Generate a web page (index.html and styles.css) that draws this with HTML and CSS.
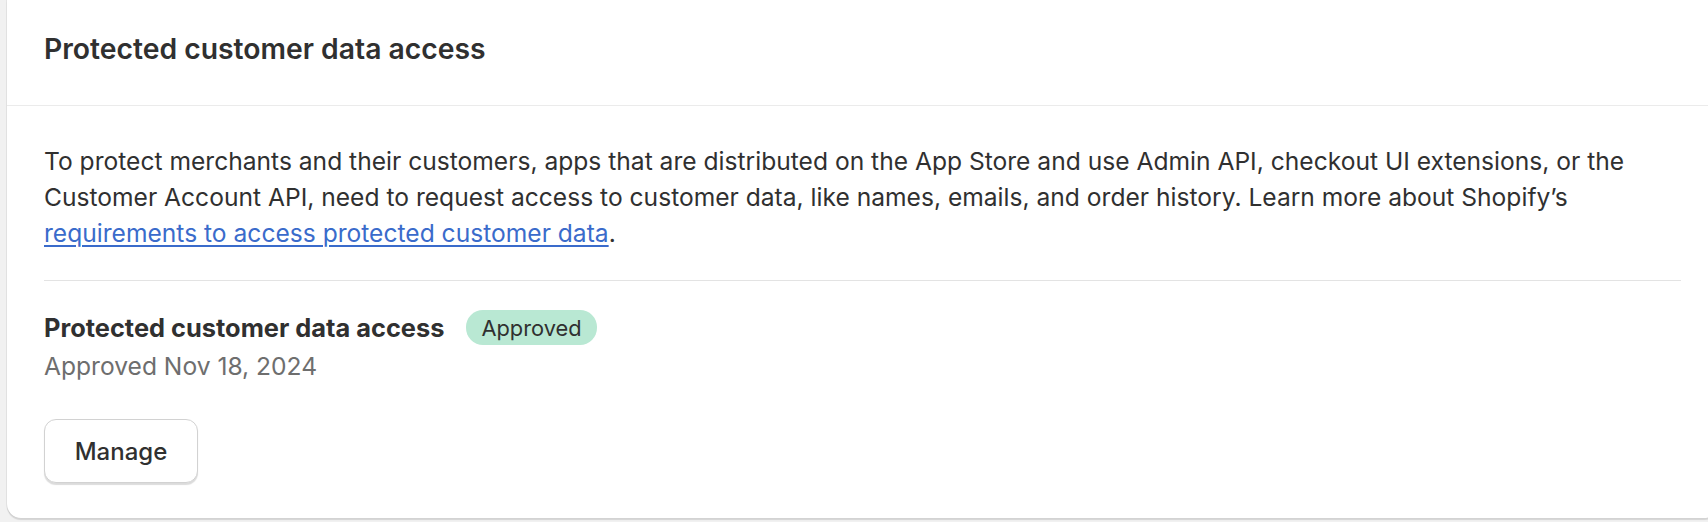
FILE: index.html
```html
<!DOCTYPE html>
<html lang="en">
<head>
<meta charset="utf-8">
<title>Protected customer data access</title>
<link rel="stylesheet" href="styles.css">
</head>
<body>
<div class="card">
  <div class="card-header">
    <h2 class="card-title">Protected customer data access</h2>
  </div>
  <div class="card-body">
    <p class="intro">To protect merchants and their customers, apps that are distributed on the App Store and use Admin API, checkout UI extensions, or the Customer Account API, need to request access to customer data, like names, emails, and order history. Learn more about Shopify’s <a class="link" href="#">requirements to access protected customer data</a>.</p>
    <hr class="divider">
    <div class="status-row">
      <h3 class="status-title">Protected customer data access</h3>
      <span class="badge">Approved</span>
    </div>
    <p class="status-date">Approved Nov 18, 2024</p>
    <button class="btn" type="button">Manage</button>
  </div>
</div>
</body>
</html>
```
FILE: styles.css
```css
html, body {
  margin: 0;
  padding: 0;
  background: #f1f1f1;
  overflow: hidden;
}
body {
  font-family: Inter, "Noto Sans", "Liberation Sans", sans-serif;
  color: #303030;
  width: 1708px;
  height: 522px;
}
.card {
  margin-left: 7px;
  width: 1711px;
  background: #ffffff;
  border-radius: 0 0 14px 14px;
  box-shadow: 0 2px 1px rgba(0, 0, 0, 0.12), -1px 0 0 rgba(0, 0, 0, 0.05);
}
.card-header {
  padding: 34px 37px 41px;
  border-bottom: 1px solid #ebebeb;
}
.card-title {
  margin: 0;
  font-size: 28.3px;
  line-height: 30px;
  font-weight: 600;
  color: #303030;
}
.card-body {
  padding: 37px 37px 35px;
}
.intro {
  margin: 0;
  font-size: 24.6px;
  line-height: 36px;
  color: #303030;
}
.link {
  color: #3a6bcb;
  text-decoration: underline;
  text-underline-offset: 3px;
  text-decoration-thickness: 1.5px;
}
.divider {
  margin: 29px 0 28px;
  border: 0;
  border-top: 1px solid #e3e3e3;
  height: 0;
}
.status-row {
  display: flex;
  align-items: center;
  gap: 22px;
  height: 37px;
}
.status-title {
  margin: 0;
  font-size: 25.4px;
  line-height: 36px;
  font-weight: 700;
  color: #303030;
}
.badge {
  display: inline-flex;
  align-items: center;
  height: 35px;
  padding: 0 15px;
  border-radius: 17px;
  background: #b9e8d3;
  color: #303030;
  font-size: 21.8px;
  font-weight: 400;
}
.status-date {
  margin: 2px 0 0;
  font-size: 24.6px;
  line-height: 36px;
  color: #6e6e6e;
}
.btn {
  margin-top: 35px;
  width: 154px;
  height: 64px;
  background: #ffffff;
  border: 1px solid #d2d2d2;
  border-radius: 12px;
  box-shadow: 0 2px 1px rgba(0, 0, 0, 0.14);
  font-family: Inter, "Noto Sans", "Liberation Sans", sans-serif;
  font-size: 24px;
  font-weight: 500;
  color: #303030;
  cursor: pointer;
}
```
